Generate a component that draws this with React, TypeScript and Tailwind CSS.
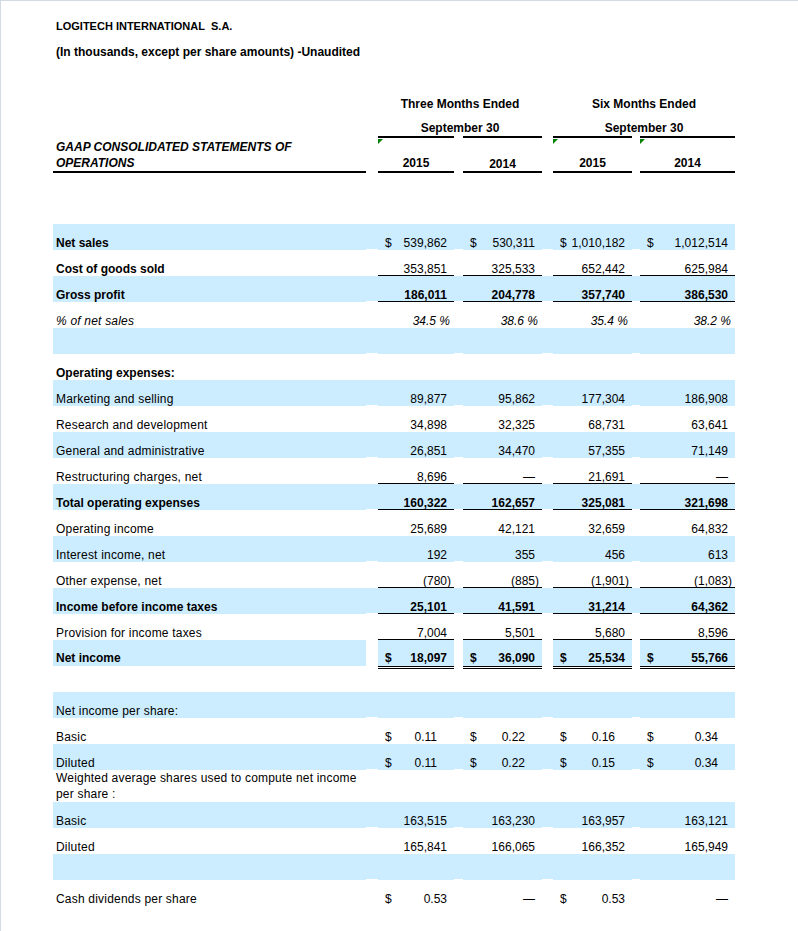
import React from "react";

const COLS = "grid grid-cols-[313px_12px_76px_9px_79px_11px_79px_8px_95px]";
const BAND = "bg-[#ccecff]";

interface Line {
  label?: React.ReactNode;
  vals?: string[];
  dollar?: boolean[];
  band?: boolean;
  labelBold?: boolean;
  valBold?: boolean;
  italic?: boolean;
  kind?: "num" | "pct" | "eps";
  rule?: "single" | "double";
  h?: string;
}

const ALL = [true, true, true, true];

const ops: Line[] = [
  { label: "Net sales", labelBold: true, band: true, dollar: ALL, vals: ["539,862", "530,311", "1,010,182", "1,012,514"] },
  { label: "Cost of goods sold", labelBold: true, rule: "single", vals: ["353,851", "325,533", "652,442", "625,984"] },
  { label: "Gross profit", labelBold: true, valBold: true, band: true, rule: "single", vals: ["186,011", "204,778", "357,740", "386,530"] },
  { label: "% of net sales", italic: true, kind: "pct", vals: ["34.5 %", "38.6 %", "35.4 %", "38.2 %"] },
  { band: true },
  { label: "Operating expenses:", labelBold: true },
  { label: "Marketing and selling", band: true, vals: ["89,877", "95,862", "177,304", "186,908"] },
  { label: "Research and development", vals: ["34,898", "32,325", "68,731", "63,641"] },
  { label: "General and administrative", band: true, vals: ["26,851", "34,470", "57,355", "71,149"] },
  { label: "Restructuring charges, net", rule: "single", vals: ["8,696", "—", "21,691", "—"] },
  { label: "Total operating expenses", labelBold: true, valBold: true, band: true, rule: "single", vals: ["160,322", "162,657", "325,081", "321,698"] },
  { label: "Operating income", vals: ["25,689", "42,121", "32,659", "64,832"] },
  { label: "Interest income, net", band: true, vals: ["192", "355", "456", "613"] },
  { label: "Other expense, net", rule: "single", vals: ["(780)", "(885)", "(1,901)", "(1,083)"] },
  { label: "Income before income taxes", labelBold: true, valBold: true, band: true, rule: "single", vals: ["25,101", "41,591", "31,214", "64,362"] },
  { label: "Provision for income taxes", rule: "single", vals: ["7,004", "5,501", "5,680", "8,596"] },
  { label: "Net income", labelBold: true, valBold: true, band: true, rule: "double", dollar: ALL, vals: ["18,097", "36,090", "25,534", "55,766"], h: "h-[29px]" },
];

const perShare: Line[] = [
  { label: "Net income per share:", band: true },
  { label: "Basic", kind: "eps", dollar: ALL, vals: ["0.11", "0.22", "0.16", "0.34"] },
  { label: "Diluted", band: true, kind: "eps", dollar: ALL, vals: ["0.11", "0.22", "0.15", "0.34"] },
  {
    label: (
      <span className="leading-[16px] whitespace-nowrap">
        Weighted average shares used to compute net income
        <br />
        per share :
      </span>
    ),
    h: "h-[32px]",
  },
  { label: "Basic", band: true, vals: ["163,515", "163,230", "163,957", "163,121"] },
  { label: "Diluted", vals: ["165,841", "166,065", "166,352", "165,949"] },
  { band: true },
  { label: "Cash dividends per share", dollar: [true, false, true, false], vals: ["0.53", "—", "0.53", "—"] },
];

function ValueCell({ row, i }: { row: Line; i: number }) {
  const v = row.vals ? row.vals[i] : "";
  const hasDollar = row.dollar ? row.dollar[i] : false;
  const double = row.rule === "double";
  const border = double
    ? "border-b-[3px] border-double border-black bg-clip-padding pb-[2px]"
    : row.rule === "single"
    ? "border-b border-black"
    : "border-b border-transparent";
  const needsParen = row.kind !== "pct" && v !== "" && !v.startsWith("(");
  const pr = row.kind === "pct" ? "pr-[4px]" : row.kind === "eps" ? "pr-[13px]" : "pr-[3px]";
  return (
    <div
      className={`flex items-end justify-between leading-[12px] ${border} ${row.band ? BAND : ""} ${
        row.valBold ? "font-bold" : ""
      } ${row.italic ? "italic" : ""}`}
    >
      <span className="pl-[7px]">{hasDollar ? "$" : ""}</span>
      <span className={`whitespace-nowrap ${pr}`}>
        {v}
        {needsParen && <span className="invisible">)</span>}
      </span>
    </div>
  );
}

function Row({ row }: { row: Line }) {
  const double = row.rule === "double";
  const spacer = row.band
    ? double
      ? "bg-white"
      : `${BAND} border-b border-white`
    : "";
  return (
    <div className={`${COLS} ${row.h ?? "h-[26px]"}`}>
      <div
        className={`flex items-end pl-[3px] leading-[12px] whitespace-nowrap ${
          double ? "border-b-[3px] border-transparent bg-clip-padding pb-[2px]" : "border-b border-transparent"
        } ${row.band ? BAND : ""} ${row.labelBold ? "font-bold" : "tracking-[0.2px]"} ${row.italic ? "italic" : ""}`}
      >
        {row.label}
      </div>
      {[0, 1, 2, 3].map((i) => (
        <React.Fragment key={i}>
          <div className={spacer} />
          <ValueCell row={row} i={i} />
        </React.Fragment>
      ))}
    </div>
  );
}

function Marker() {
  return (
    <span className="absolute left-0 top-[1px] w-0 h-0 border-t-[5px] border-t-[#008000] border-r-[5px] border-r-transparent" />
  );
}

export default function App() {
  return (
    <div className="w-[798px] h-[931px] overflow-hidden bg-white border-t border-l border-[#d3dae6] text-black text-[12px] font-['Liberation_Sans',Arial,sans-serif]">
      <div className="pl-[55px] pt-[18px] leading-[14px] font-bold text-[11px]">LOGITECH INTERNATIONAL&nbsp; S.A.</div>
      <div className="pl-[55px] mt-[12px] leading-[14px] font-bold">(In thousands, except per share amounts) -Unaudited</div>

      <div className="pl-[52px] mt-[38px]">
        {/* period headings */}
        <div className={COLS}>
          <div />
          <div />
          <div className="col-span-3 flex flex-col font-bold leading-[14px]">
            <div className="text-center">Three Months Ended</div>
            <div className="text-center mt-[10px]">September 30</div>
            <div className="grid grid-cols-[76px_9px_79px] mt-[1px]">
              <div className="h-[2px] bg-black" />
              <div />
              <div className="h-[2px] bg-black" />
            </div>
          </div>
          <div />
          <div className="col-span-3 flex flex-col font-bold leading-[14px]">
            <div className="text-center">Six Months Ended</div>
            <div className="text-center mt-[10px]">September 30</div>
            <div className="grid grid-cols-[79px_8px_95px] mt-[1px]">
              <div className="h-[2px] bg-black" />
              <div />
              <div className="h-[2px] bg-black" />
            </div>
          </div>
        </div>

        {/* statement title and years */}
        <div className={`${COLS} h-[35px] font-bold`}>
          <div className="flex items-end pl-[3px] border-b-2 border-black italic leading-[16px] whitespace-nowrap">
            <span>
              GAAP CONSOLIDATED STATEMENTS OF
              <br />
              OPERATIONS
            </span>
          </div>
          <div />
          <div className="relative flex items-end justify-center pb-[1px] border-b-2 border-black leading-[14px]">
            <Marker />
            2015
          </div>
          <div />
          <div className="flex items-end justify-center border-b-2 border-black leading-[14px]">2014</div>
          <div />
          <div className="relative flex items-end justify-center pb-[1px] border-b-2 border-black leading-[14px]">
            <Marker />
            2015
          </div>
          <div />
          <div className="relative flex items-end justify-center pb-[1px] border-b-2 border-black leading-[14px]">
            <Marker />
            2014
          </div>
        </div>

        <div className="mt-[51px]">
          {ops.map((r, i) => (
            <Row key={i} row={r} />
          ))}
        </div>

        <div className="mt-[23px]">
          {perShare.map((r, i) => (
            <Row key={i} row={r} />
          ))}
        </div>
      </div>
    </div>
  );
}
